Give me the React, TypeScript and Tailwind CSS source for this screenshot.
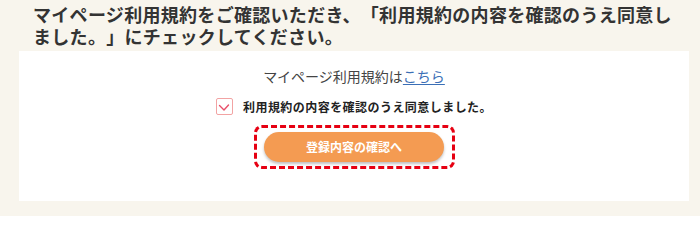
export default function App() {
  return (
    <div
      className="w-[700px] h-[216px] bg-[#f8f5ed] overflow-hidden"
      style={{ fontFamily: '"Noto Sans CJK JP", "Noto Sans", sans-serif' }}
    >
      {/* Heading */}
      <h1 className="pl-[33px] pt-[3px] text-[18px] leading-[22px] font-bold tracking-[0.3px] text-[#333333] whitespace-nowrap [text-spacing-trim:space-all]">
        マイページ利用規約をご確認いただき、「利用規約の内容を確認のうえ同意し
        <br />
        ました。」にチェックしてください。
      </h1>

      {/* Panel */}
      <div className="mt-[4px] ml-[19px] w-[670px] h-[150px] bg-white flex flex-col items-center pt-[15px]">
        <p className="text-[14px] leading-[20px] text-[#444444]">
          マイページ利用規約は
          <a href="#" className="text-[#3b6fb6] underline underline-offset-2">
            こちら
          </a>
        </p>

        <label className="mt-[12px] flex items-center gap-[10px] h-[17px]">
          <span className="w-[17px] h-[17px] border border-[#f2a3a3] rounded-[2px] bg-white flex items-center justify-center">
            <svg width="12" height="10" viewBox="0 0 12 10" fill="none">
              <path d="M1.5 3.5 L6 8 L10.5 3" stroke="#e8506a" strokeWidth="1.4" strokeLinecap="round" strokeLinejoin="round" />
            </svg>
          </span>
          <span className="text-[12px] leading-[16px] font-bold tracking-[0.45px] text-[#222222]">
            利用規約の内容を確認のうえ同意しました。
          </span>
        </label>

        <div className="mt-[10px] w-[201px] h-[44px] border-[3px] border-dashed border-[#e60012] rounded-[8px] flex items-center justify-center">
          <button className="w-[180px] h-[30px] rounded-full bg-[#f49b52] text-white text-[12px] font-bold shadow-[0_2px_3px_rgba(0,0,0,0.25)]">
            登録内容の確認へ
          </button>
        </div>
      </div>
    </div>
  );
}
